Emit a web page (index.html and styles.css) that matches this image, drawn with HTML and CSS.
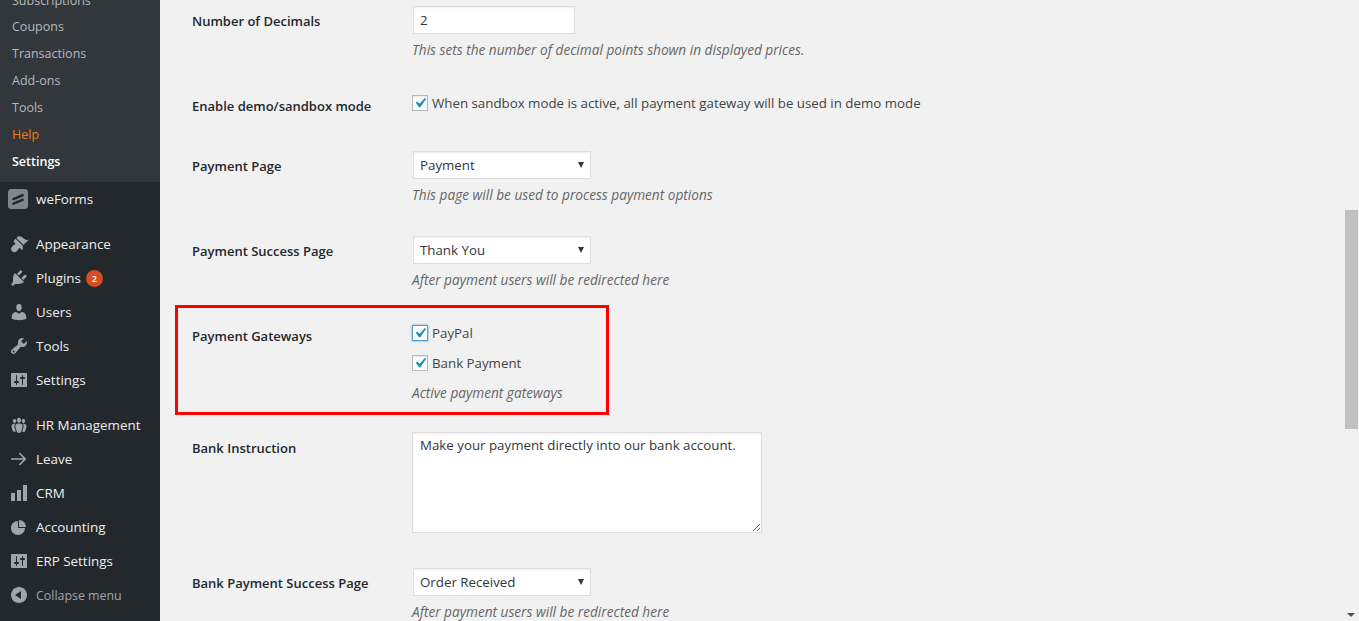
FILE: index.html
```html
<!DOCTYPE html>
<html lang="en">
<head>
    <meta charset="UTF-8">
    <title>Settings</title>
    <link rel="stylesheet" href="styles.css">
</head>
<body>
    <nav class="sidebar">
        <ul class="submenu">
            <li>Subscriptions</li>
            <li>Coupons</li>
            <li>Transactions</li>
            <li>Add-ons</li>
            <li>Tools</li>
            <li class="submenu-help">Help</li>
            <li class="submenu-current">Settings</li>
        </ul>
        <ul class="menu">
            <li class="menu-item">
                <svg class="menu-logo" viewBox="0 0 20 20"><rect width="20" height="20" rx="3.5" fill="#82878c"/><path d="M4.5 9.2l9.5-4.1c1.2-.4 1.9.4 1.7 1.4l-.1.7-9.6 4c-1.3.5-2-.4-1.7-1.3zm0 4.6l9.6-4.1c1.1-.4 1.8.4 1.6 1.4l-.1.7-9.6 4c-1.3.5-2-.4-1.7-1.3z" fill="#23282d"/></svg>
                weForms
            </li>
            <li class="menu-item menu-first">
                <svg class="menu-icon" viewBox="0 0 20 20"><path d="M14.48 11.06L7.41 3.99l1.5-1.5c.5-.56 2.3-.47 3.51.32 1.21.8 1.43 1.28 2.91 2.1 1.18.64 2.45 1.26 4.45.85zm-.71.71L6.7 4.7 4.93 6.47c-.39.39-.39 1.02 0 1.41l1.06 1.06c.39.39.39 1.03 0 1.42-.6.6-1.43 1.11-2.21 1.69-.35.26-.7.53-1.01.84-1.43 1.43-.51 3.42.39 4.33.89.89 2.9 1.82 4.33.39.31-.31.58-.66.84-1.01.58-.78 1.09-1.61 1.69-2.21.39-.39 1.03-.39 1.42 0l1.06 1.06c.39.39 1.02.39 1.41 0z"/></svg>
                Appearance
            </li>
            <li class="menu-item">
                <svg class="menu-icon" viewBox="0 0 20 20"><path d="M13.11 4.36L9.87 7.6 8 5.73l3.24-3.24c.35-.34 1.05-.2 1.56.32.52.51.66 1.21.31 1.55zm-8 1.77l.91-1.12 9.01 9.01-1.19.84c-.71.71-2.63 1.16-3.82 1.16H6.14L4.9 17.26c-.59.59-1.54.59-2.12 0-.59-.58-.59-1.53 0-2.12l1.24-1.24v-3.88c0-1.13.4-3.19 1.09-3.89zm7.26 3.97l3.24-3.24c.34-.35 1.04-.21 1.55.31.52.51.66 1.21.31 1.55l-3.24 3.25z"/></svg>
                Plugins
                <span class="badge">2</span>
            </li>
            <li class="menu-item">
                <svg class="menu-icon" viewBox="0 0 20 20"><path d="M10 9.25c-2.27 0-2.73-3.44-2.73-3.44C7 4.02 7.82 2 9.97 2c2.16 0 2.98 2.02 2.71 3.81 0 0-.41 3.44-2.68 3.44zm0 2.57L12.72 10c2.39 0 4.52 2.33 4.52 4.53v2.49s-3.65 1.13-7.24 1.13c-3.65 0-7.24-1.13-7.24-1.13v-2.49c0-2.25 1.94-4.48 4.47-4.48z"/></svg>
                Users
            </li>
            <li class="menu-item">
                <svg class="menu-icon" viewBox="0 0 20 20"><path d="M16.68 9.77c-1.34 1.34-3.3 1.67-4.95.99l-5.41 6.52c-.99.99-2.59.99-3.58 0s-.99-2.59 0-3.57l6.52-5.42c-.68-1.65-.35-3.61.99-4.95 1.28-1.28 3.12-1.62 4.72-1.06l-2.89 2.89 2.82 2.82 2.86-2.87c.53 1.58.18 3.39-1.08 4.65zM3.81 16.21c.4.39 1.04.39 1.43 0 .4-.4.4-1.04 0-1.43-.39-.4-1.03-.4-1.43 0-.39.39-.39 1.03 0 1.43z"/></svg>
                Tools
            </li>
            <li class="menu-item">
                <svg class="menu-icon" viewBox="0 0 20 20"><path d="M18 16V4c0-.55-.45-1-1-1H3c-.55 0-1 .45-1 1v12c0 .55.45 1 1 1h14c.55 0 1-.45 1-1zM8 11h1c.55 0 1 .45 1 1s-.45 1-1 1H8v1.5c0 .28-.22.5-.5.5s-.5-.22-.5-.5V13H6c-.55 0-1-.45-1-1s.45-1 1-1h1V5.5c0-.28.22-.5.5-.5s.5.22.5.5V11zm5-2h-1c-.55 0-1-.45-1-1s.45-1 1-1h1V5.5c0-.28.22-.5.5-.5s.5.22.5.5V7h1c.55 0 1 .45 1 1s-.45 1-1 1h-1v5.5c0 .28-.22.5-.5.5s-.5-.22-.5-.5V9z"/></svg>
                Settings
            </li>
            <li class="menu-item menu-first">
                <svg class="menu-icon" viewBox="0 0 20 20"><path d="M8.03 4.46c-.29 1.28.55 3.46 1.97 3.46 1.41 0 2.25-2.18 1.96-3.46-.22-.98-1.08-1.63-1.96-1.63-.89 0-1.74.65-1.97 1.63zm-4.13.9c-.25 1.08.47 2.93 1.67 2.93s1.92-1.85 1.67-2.93c-.19-.83-.92-1.39-1.67-1.39s-1.48.56-1.67 1.39zm8.86 0c-.25 1.08.47 2.93 1.66 2.93 1.2 0 1.92-1.85 1.67-2.93-.19-.83-.92-1.39-1.67-1.39-.74 0-1.47.56-1.66 1.39zm-.59 11.43l1.25-4.3C14.2 10 12.71 8.47 10 8.47c-2.72 0-4.21 1.53-3.44 4.02l1.26 4.3C8.05 17.51 9 18 10 18c.98 0 1.94-.49 2.17-1.21zm-6.1-7.63c-.49.67-.96 1.83-.42 3.59l1.12 3.79c-.34.2-.77.31-1.2.31-.85 0-1.65-.41-1.85-1.03l-1.07-3.65c-.65-2.11.61-3.41 2.92-3.41.27 0 .54.02.79.06-.1.1-.2.22-.29.34zm8.35-.34c2.31 0 3.58 1.3 2.92 3.41l-1.07 3.65c-.2.62-1 1.03-1.85 1.03-.43 0-.86-.11-1.2-.31l1.11-3.77c.55-1.78.08-2.94-.42-3.61-.08-.11-.18-.23-.28-.33.25-.04.51-.07.79-.07z"/></svg>
                HR Management
            </li>
            <li class="menu-item">
                <svg class="menu-icon" viewBox="0 0 20 20"><path d="M2 9.2h12.3L9.8 4.6l1.1-1.1L17.4 10l-6.5 6.5-1.1-1.1 4.5-4.6H2z"/></svg>
                Leave
            </li>
            <li class="menu-item">
                <svg class="menu-icon" viewBox="0 0 20 20"><path d="M18 18V2h-4v16h4zm-6 0V7H8v11h4zm-6 0v-8H2v8h4z"/></svg>
                CRM
            </li>
            <li class="menu-item">
                <svg class="menu-icon" viewBox="0 0 20 20"><path d="M10 10V3c3.87 0 7 3.13 7 7h-7zM9 4v7h7c0 3.87-3.13 7-7 7s-7-3.13-7-7 3.13-7 7-7z"/></svg>
                Accounting
            </li>
            <li class="menu-item">
                <svg class="menu-icon" viewBox="0 0 20 20"><path d="M18 16V4c0-.55-.45-1-1-1H3c-.55 0-1 .45-1 1v12c0 .55.45 1 1 1h14c.55 0 1-.45 1-1zM8 11h1c.55 0 1 .45 1 1s-.45 1-1 1H8v1.5c0 .28-.22.5-.5.5s-.5-.22-.5-.5V13H6c-.55 0-1-.45-1-1s.45-1 1-1h1V5.5c0-.28.22-.5.5-.5s.5.22.5.5V11zm5-2h-1c-.55 0-1-.45-1-1s.45-1 1-1h1V5.5c0-.28.22-.5.5-.5s.5.22.5.5V7h1c.55 0 1 .45 1 1s-.45 1-1 1h-1v5.5c0 .28-.22.5-.5.5s-.5-.22-.5-.5V9z"/></svg>
                ERP Settings
            </li>
            <li class="menu-item menu-collapse">
                <svg class="menu-icon" viewBox="0 0 20 20"><path d="M10 2c-4.42 0-8 3.58-8 8s3.58 8 8 8 8-3.58 8-8-3.58-8-8-8zm2 12l-6-4 6-4v8z"/></svg>
                Collapse menu
            </li>
        </ul>
    </nav>

    <main class="content">
        <form class="settings-form">
            <div class="row-label">Number of Decimals</div>
            <div>
                <input class="field-text" type="text" value="2">
                <p class="description">This sets the number of decimal points shown in displayed prices.</p>
            </div>

            <div class="row-label row-label-check">Enable demo/sandbox mode</div>
            <div>
                <label class="check-line">
                    <span class="checkbox"><svg viewBox="0 0 20 20"><path d="M14.83 4.89l1.34.94-5.81 8.38H9.02L5.78 9.67l1.34-1.25 2.57 2.4z"/></svg></span>
                    When sandbox mode is active, all payment gateway will be used in demo mode
                </label>
            </div>

            <div class="row-label">Payment Page</div>
            <div>
                <div class="select-box"><select><option>Payment</option></select></div>
                <p class="description">This page will be used to process payment options</p>
            </div>

            <div class="row-label">Payment Success Page</div>
            <div>
                <div class="select-box"><select><option>Thank You</option></select></div>
                <p class="description">After payment users will be redirected here</p>
            </div>

            <div class="row-label row-label-check">Payment Gateways</div>
            <div class="gateways">
                <label class="check-line">
                    <span class="checkbox checkbox-focus"><svg viewBox="0 0 20 20"><path d="M14.83 4.89l1.34.94-5.81 8.38H9.02L5.78 9.67l1.34-1.25 2.57 2.4z"/></svg></span>
                    PayPal
                </label>
                <label class="check-line">
                    <span class="checkbox"><svg viewBox="0 0 20 20"><path d="M14.83 4.89l1.34.94-5.81 8.38H9.02L5.78 9.67l1.34-1.25 2.57 2.4z"/></svg></span>
                    Bank Payment
                </label>
                <p class="description">Active payment gateways</p>
                <div class="highlight-box"></div>
            </div>

            <div class="row-label row-label-area">Bank Instruction</div>
            <div>
                <textarea class="field-area">Make your payment directly into our bank account.</textarea>
            </div>

            <div class="row-label">Bank Payment Success Page</div>
            <div>
                <div class="select-box"><select><option>Order Received</option></select></div>
                <p class="description">After payment users will be redirected here</p>
            </div>
        </form>
    </main>

    <div class="scrollbar">
        <div class="scrollbar-thumb"></div>
        <div class="scrollbar-arrow"></div>
    </div>
</body>
</html>
```

FILE: styles.css
```css
* {
    box-sizing: border-box;
}
html, body {
    height: 100%;
}
body {
    margin: 0;
    display: flex;
    overflow: hidden;
    background: #f1f1f1;
    color: #444;
    font-family: 'Open Sans', 'Noto Sans', sans-serif;
    font-size: 13.3px;
}

/* sidebar */
.sidebar {
    width: 160px;
    flex-shrink: 0;
    background: #23282d;
    color: #eee;
    font-size: 13.4px;
}
.sidebar ul {
    margin: 0;
    padding: 0;
    list-style: none;
}
.sidebar .submenu {
    height: 194.5px;
    margin-top: -12.5px;
    background: #32373c;
    color: #b4b9be;
    font-size: 12.5px;
    overflow: hidden;
}
.submenu li {
    height: 26.9px;
    line-height: 26.9px;
    padding-left: 12px;
}
.submenu .submenu-help {
    color: #f67a0c;
}
.submenu .submenu-current {
    color: #fff;
    font-weight: 600;
}
.menu-item {
    display: flex;
    align-items: center;
    height: 34px;
    padding-left: 9px;
    white-space: nowrap;
}
.menu-first {
    margin-top: 11px;
}
.menu-icon {
    width: 20px;
    height: 20px;
    margin-right: 7px;
    fill: #a0a5aa;
}
.menu-logo {
    width: 20px;
    height: 20px;
    margin-left: -1px;
    margin-right: 8px;
}
.menu-collapse {
    color: #a0a5aa;
    font-size: 12.4px;
}
.badge {
    width: 17px;
    height: 17px;
    margin-left: 5px;
    border-radius: 50%;
    background: #d54e21;
    color: #fff;
    font-size: 9px;
    font-weight: 600;
    line-height: 17px;
    text-align: center;
}

/* settings form */
.content {
    flex: 1;
    min-width: 0;
    padding: 6px 0 0 32px;
}
.settings-form {
    display: grid;
    grid-template-columns: 220px 1fr;
    grid-template-rows: 87px 58px 85px 87px 109px 136px 60px;
}
.row-label {
    padding-top: 5px;
    color: #23282d;
    font-size: 13px;
    font-weight: 600;
    line-height: 20px;
}
.row-label-check {
    padding-top: 3px;
}
.row-label-area {
    padding-top: 6px;
}
.description {
    margin: 6px 0 0;
    color: #666;
    font-size: 13.65px;
    font-style: italic;
    line-height: 20px;
}
.field-text {
    display: block;
    width: 162px;
    height: 28px;
    margin-left: 1px;
    padding: 0 6px;
    border: 1px solid #ddd;
    box-shadow: inset 0 1px 2px rgba(0, 0, 0, 0.07);
    background: #fff;
    color: #32373c;
    font: inherit;
}
.select-box {
    position: relative;
    width: 178px;
    height: 28px;
    margin-left: 1px;
}
.select-box::after {
    content: "";
    position: absolute;
    top: 11px;
    right: 7px;
    border-top: 6px solid #32373c;
    border-left: 3px solid transparent;
    border-right: 3px solid transparent;
}
.select-box select {
    appearance: none;
    display: block;
    width: 100%;
    height: 100%;
    padding: 0 6px;
    border: 1px solid #ddd;
    border-radius: 0;
    box-shadow: inset 0 1px 2px rgba(0, 0, 0, 0.07);
    background: #fff;
    color: #32373c;
    font: inherit;
}
.check-line {
    display: flex;
    align-items: center;
    height: 20px;
    white-space: nowrap;
}
.check-line + .check-line {
    margin-top: 10px;
}
.checkbox {
    width: 16px;
    height: 16px;
    margin-right: 4px;
    border: 1px solid #b4b9be;
    box-shadow: inset 0 1px 2px rgba(0, 0, 0, 0.1);
    background: #fff;
    fill: #1e8cbe;
}
.checkbox svg {
    display: block;
    width: 20px;
    height: 20px;
    margin: -3px;
}
.checkbox-focus {
    border-color: #5b9dd9;
    box-shadow: 0 0 2px rgba(30, 140, 190, 0.8);
}
.gateways {
    position: relative;
}
.gateways .description {
    margin-top: 10px;
}
.highlight-box {
    position: absolute;
    top: -18px;
    left: -237px;
    width: 434px;
    height: 110px;
    border: 3px solid #f00;
}
.field-area {
    display: block;
    width: 350px;
    height: 101px;
    padding: 2px 7px;
    border: 1px solid #ddd;
    box-shadow: inset 0 1px 2px rgba(0, 0, 0, 0.07);
    background: #fff;
    color: #32373c;
    font: inherit;
    line-height: 20px;
}

/* fake window scrollbar */
.scrollbar {
    position: relative;
    width: 17px;
    flex-shrink: 0;
    padding: 210px 1px 0 3px;
    background: #f1f1f1;
}
.scrollbar-thumb {
    height: 219px;
    background: #c1c1c1;
}
.scrollbar-arrow {
    position: absolute;
    right: 4px;
    bottom: 4px;
    border-top: 4px solid #505050;
    border-left: 4px solid transparent;
    border-right: 4px solid transparent;
}
```
